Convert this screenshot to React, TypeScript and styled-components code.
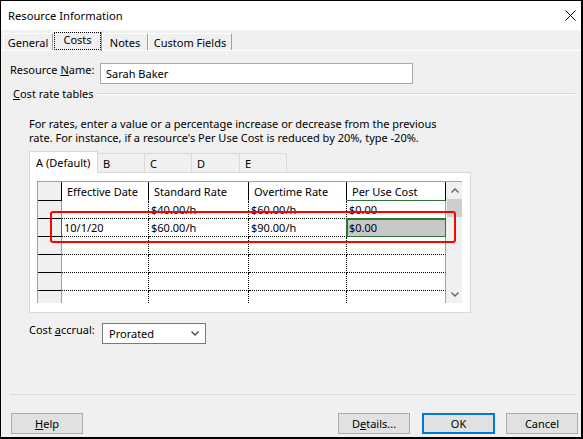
import styled, { createGlobalStyle, css } from "styled-components";

const GlobalStyle = createGlobalStyle`
  html, body {
    margin: 0;
    padding: 0;
    background: #fff;
  }
  body {
    font-family: "Noto Sans", "Segoe UI", sans-serif;
    font-size: 11px;
    color: #000;
  }
  *, *::before, *::after {
    box-sizing: border-box;
  }
`;

const GREEN = "#2f7532";

const Window = styled.div`
  width: 583px;
  height: 439px;
  display: flex;
  flex-direction: column;
  background: #f0f0f0;
  border: 1px solid #000;
  border-right-width: 2px;
  border-bottom-width: 2px;
  line-height: 15px;
  overflow: hidden;
`;

const TitleBar = styled.div`
  height: 29px;
  flex-shrink: 0;
  display: flex;
  align-items: center;
  justify-content: space-between;
  padding: 0 5px 0 7px;
  background: #fff;
  font-size: 11.2px;
`;

const TabStrip = styled.div`
  height: 20px;
  margin-top: 1px;
  flex-shrink: 0;
  display: flex;
  align-items: flex-end;
  padding-left: 2px;
  border-bottom: 1px solid #fff;
`;

const PageTab = styled.div<{ $w: number; $active?: boolean }>`
  width: ${(p) => p.$w}px;
  height: ${(p) => (p.$active ? 20 : 17)}px;
  margin-bottom: ${(p) => (p.$active ? -1 : 0)}px;
  padding-top: ${(p) => (p.$active ? 0 : 1)}px;
  display: flex;
  justify-content: center;
  white-space: nowrap;
  background: #f0f0f0;
  border: 1px solid #fff;
  border-bottom: none;
  border-right-color: #a0a0a0;
  position: relative;
  z-index: ${(p) => (p.$active ? 1 : 0)};
  ${(p) =>
    p.$active &&
    css`
      outline: 1px dotted #000;
      outline-offset: -2px;
    `}
`;

const Body = styled.div`
  flex: 1;
  display: flex;
  flex-direction: column;
`;

const NameRow = styled.div`
  display: flex;
  align-items: flex-start;
  margin-top: 12px;
  padding-left: 9px;
`;

const FieldLabel = styled.label<{ $w: number }>`
  width: ${(p) => p.$w}px;
  flex-shrink: 0;
  margin-top: -1px;
  white-space: nowrap;
`;

const TextBox = styled.div`
  width: 313px;
  height: 21px;
  display: flex;
  align-items: center;
  padding-left: 5px;
  background: #fff;
  border: 1px solid #a9a9a9;
`;

const GroupHeader = styled.div`
  height: 15px;
  margin-top: 2px;
  display: flex;
  align-items: center;
  padding: 0 6px 0 12px;
  white-space: nowrap;
`;

const GroupRule = styled.div`
  flex: 1;
  height: 2px;
  margin-left: 4px;
  border-top: 1px solid #d5d5d5;
  border-bottom: 1px solid #fff;
`;

const Hint = styled.p`
  margin: 16px 0 0 28px;
  line-height: 14px;
  white-space: nowrap;
`;

const TableTabs = styled.div`
  display: flex;
  align-items: flex-end;
  margin: 6px 0 0 28px;
`;

const TableTab = styled.div<{ $w: number; $active?: boolean }>`
  width: ${(p) => p.$w}px;
  height: ${(p) => (p.$active ? 22 : 19)}px;
  margin-bottom: ${(p) => (p.$active ? -1 : 0)}px;
  margin-left: ${(p) => (p.$active ? 0 : -1)}px;
  display: flex;
  align-items: center;
  padding: ${(p) => (p.$active ? "0 0 1px 6px" : "0 0 0 5px")};
  white-space: nowrap;
  background: ${(p) => (p.$active ? "#fff" : "#f0f0f0")};
  border: 1px solid #d9d9d9;
  border-bottom: none;
  position: relative;
  z-index: ${(p) => (p.$active ? 1 : 0)};
`;

const Panel = styled.div`
  position: relative;
  width: 442px;
  height: 141px;
  margin-left: 28px;
  padding: 8px 0 0 7px;
  background: #fff;
  border: 1px solid #d9d9d9;
`;

const Grid = styled.div`
  width: 425px;
  height: 122px;
  display: flex;
  border-top: 1px solid #a0a0a0;
  border-left: 1px solid #a0a0a0;
  overflow: hidden;
`;

const Table = styled.div`
  width: 408px;
  display: flex;
  flex-direction: column;
`;

const COLS = "24px 87px 100px 98px 99px";

const GridRow = styled.div<{ $head?: boolean }>`
  display: grid;
  grid-template-columns: ${COLS};
  height: ${(p) => (p.$head ? 19 : 18)}px;
  flex-shrink: 0;
`;

const Corner = styled.div`
  background: #f0f0f0;
  border-right: 1px solid #000;
  border-bottom: 1px solid #000;
`;

const HeadCell = styled.div<{ $accent?: boolean }>`
  display: flex;
  align-items: center;
  padding-left: 5px;
  white-space: nowrap;
  background: #fff;
  border-right: 1px solid #000;
  border-bottom: 1px solid ${(p) => (p.$accent ? GREEN : "#fff")};
`;

const RowHead = styled.div<{ $active?: boolean }>`
  background: #f0f0f0;
  border-bottom: 1px solid #000;
  border-right: 1px solid ${(p) => (p.$active ? GREEN : "#a0a0a0")};
`;

const DataCell = styled.div<{ $last?: boolean; $selected?: boolean }>`
  display: flex;
  align-items: center;
  padding-left: 2px;
  white-space: nowrap;
  overflow: hidden;
  background: ${(p) => (p.$selected ? "#c8c8c8" : "#fff")};
  border-bottom: 1px dotted #000;
  border-right: 1px ${(p) => (p.$last ? "solid #a0a0a0" : "dotted #000")};
  ${(p) =>
    p.$selected &&
    css`
      outline: 2px solid ${GREEN};
      outline-offset: -1px;
    `}
`;

const ScrollBar = styled.div`
  width: 16px;
  display: flex;
  flex-direction: column;
  background: #f0f0f0;
`;

const ScrollButton = styled.div`
  height: 17px;
  flex-shrink: 0;
  display: flex;
  align-items: center;
  justify-content: center;
  padding-left: 1px;
`;

const Thumb = styled.div`
  height: 18px;
  margin-left: 1px;
  background: #cdcdcd;
`;

const Track = styled.div`
  flex: 1;
`;

const Annotation = styled.div`
  position: absolute;
  left: 20px;
  top: 38px;
  width: 406px;
  height: 32px;
  border: 2px solid #ff0000;
  border-radius: 3px;
  pointer-events: none;
`;

const AccrualRow = styled.div`
  display: flex;
  align-items: flex-start;
  margin-top: 10px;
  padding-left: 28px;
`;

const ComboBox = styled.div`
  width: 104px;
  height: 21px;
  display: flex;
  align-items: center;
  justify-content: space-between;
  padding: 0 6px 0 6px;
  background: #fff;
  border: 1px solid #7a7a7a;
`;

const Footer = styled.div`
  margin-top: auto;
`;

const Separator = styled.div`
  margin: 0 5px 0 9px;
  border-top: 1px solid #dadada;
`;

const ButtonRow = styled.div`
  display: flex;
  height: 21px;
  margin: 18px 0 3px;
  padding: 0 3px 0 10px;
`;

const Button = styled.div<{ $w?: number; $gap?: number; $default?: boolean }>`
  width: ${(p) => p.$w ?? 72}px;
  height: 21px;
  margin-left: ${(p) => (p.$gap === undefined ? "0" : `${p.$gap}px`)};
  display: flex;
  align-items: center;
  justify-content: center;
  background: #e1e1e1;
  border: ${(p) => (p.$default ? "2px solid #0078d7" : "1px solid #adadad")};
`;

const Chevron = ({ up, color = "#606060" }: { up?: boolean; color?: string }) => (
  <svg width="8" height="5" viewBox="0 0 8 5">
    <polyline
      points={up ? "0.5,4.5 4,1 7.5,4.5" : "0.5,0.5 4,4 7.5,0.5"}
      fill="none"
      stroke={color}
      strokeWidth="1.3"
    />
  </svg>
);

const pageTabs = [
  { label: "General", w: 50 },
  { label: "Costs", w: 49, active: true },
  { label: "Notes", w: 46 },
  { label: "Custom Fields", w: 84 },
];

const tableTabs = [
  { label: "A (Default)", w: 69, active: true },
  { label: "B", w: 48 },
  { label: "C", w: 48 },
  { label: "D", w: 49 },
  { label: "E", w: 48 },
];

const rows = [
  { date: "", std: "$40.00/h", ot: "$60.00/h", cost: "$0.00" },
  { date: "10/1/20", std: "$60.00/h", ot: "$90.00/h", cost: "$0.00", active: true },
  { date: "", std: "", ot: "", cost: "" },
  { date: "", std: "", ot: "", cost: "" },
  { date: "", std: "", ot: "", cost: "" },
  { date: "", std: "", ot: "", cost: "" },
];

export default function App() {
  return (
    <>
      <GlobalStyle />
      <Window>
        <TitleBar>
          <span>Resource Information</span>
          <svg width="11" height="11" viewBox="0 0 11 11">
            <path d="M0.5 0.5 L10.5 10.5 M10.5 0.5 L0.5 10.5" stroke="#000" strokeWidth="1" />
          </svg>
        </TitleBar>

        <TabStrip>
          {pageTabs.map((t) => (
            <PageTab key={t.label} $w={t.w} $active={t.active}>
              {t.label}
            </PageTab>
          ))}
        </TabStrip>

        <Body>
          <NameRow>
            <FieldLabel $w={90}>
              Resource <u>N</u>ame:
            </FieldLabel>
            <TextBox>Sarah Baker</TextBox>
          </NameRow>

          <GroupHeader>
            <span>
              <u>C</u>ost rate tables
            </span>
            <GroupRule />
          </GroupHeader>

          <Hint>
            For rates, enter a value or a percentage increase or decrease from the previous
            <br />
            rate. For instance, if a resource's Per Use Cost is reduced by 20%, type -20%.
          </Hint>

          <TableTabs>
            {tableTabs.map((t) => (
              <TableTab key={t.label} $w={t.w} $active={t.active}>
                {t.label}
              </TableTab>
            ))}
          </TableTabs>

          <Panel>
            <Grid>
              <Table>
                <GridRow $head>
                  <Corner />
                  <HeadCell>Effective Date</HeadCell>
                  <HeadCell>Standard Rate</HeadCell>
                  <HeadCell>Overtime Rate</HeadCell>
                  <HeadCell $accent>Per Use Cost</HeadCell>
                </GridRow>
                {rows.map((r, i) => (
                  <GridRow key={i}>
                    <RowHead $active={r.active} />
                    <DataCell>{r.date}</DataCell>
                    <DataCell>{r.std}</DataCell>
                    <DataCell>{r.ot}</DataCell>
                    <DataCell $last $selected={r.active}>
                      {r.cost}
                    </DataCell>
                  </GridRow>
                ))}
              </Table>
              <ScrollBar>
                <ScrollButton>
                  <Chevron up />
                </ScrollButton>
                <Thumb />
                <Track />
                <ScrollButton>
                  <Chevron />
                </ScrollButton>
              </ScrollBar>
            </Grid>
            <Annotation />
          </Panel>

          <AccrualRow>
            <FieldLabel $w={73}>
              Cost <u>a</u>ccrual:
            </FieldLabel>
            <ComboBox>
              <span>Prorated</span>
              <Chevron color="#444" />
            </ComboBox>
          </AccrualRow>

          <Footer>
            <Separator />
            <ButtonRow>
              <Button>
                <span>
                  <u>H</u>elp
                </span>
              </Button>
              <Button $gap={255}>
                <span>
                  D<u>e</u>tails...
                </span>
              </Button>
              <Button $gap={12} $w={73} $default>
                OK
              </Button>
              <Button $gap={11}>Cancel</Button>
            </ButtonRow>
          </Footer>
        </Body>
      </Window>
    </>
  );
}
